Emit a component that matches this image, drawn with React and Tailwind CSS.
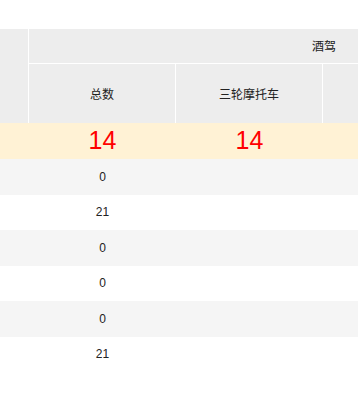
export default function App() {
  const rows = [
    { total: "0", bg: "bg-[#f5f5f5]" },
    { total: "21", bg: "bg-white" },
    { total: "0", bg: "bg-[#f5f5f5]" },
    { total: "0", bg: "bg-white" },
    { total: "0", bg: "bg-[#f5f5f5]" },
    { total: "21", bg: "bg-white" },
  ];

  return (
    <div className="w-[358px] h-[411px] overflow-hidden bg-white text-[12px] text-[#222] font-['Liberation_Sans','Noto_Sans_CJK_SC',sans-serif]">
      <div className="h-[29px]" />

      {/* Header */}
      <div className="flex h-[94px] bg-[#ededed]">
        <div className="w-[29px] shrink-0 border-r border-white" />
        <div className="flex-1 flex flex-col">
          <div className="h-[35px] border-b border-white flex items-center justify-end pr-[22px] font-['Noto_Sans_CJK_SC',sans-serif]">
            酒驾
          </div>
          <div className="flex-1 flex font-['Noto_Sans_CJK_SC',sans-serif]">
            <div className="w-[147px] shrink-0 border-r border-white flex items-center justify-center">
              总数
            </div>
            <div className="w-[147px] shrink-0 border-r border-white flex items-center justify-center">
              三轮摩托车
            </div>
            <div className="flex-1" />
          </div>
        </div>
      </div>

      {/* Summary row */}
      <div className="flex h-[36px] bg-[#fff2d5] text-[#ff0000] text-[25px]">
        <div className="w-[29px] shrink-0" />
        <div className="w-[147px] shrink-0 flex items-center justify-center">14</div>
        <div className="w-[147px] shrink-0 flex items-center justify-center">14</div>
      </div>

      {rows.map((r, i) => (
        <div key={i} className={`flex h-[35.5px] ${r.bg}`}>
          <div className="w-[29px] shrink-0" />
          <div className="w-[147px] shrink-0 flex items-center justify-center">{r.total}</div>
        </div>
      ))}
    </div>
  );
}
